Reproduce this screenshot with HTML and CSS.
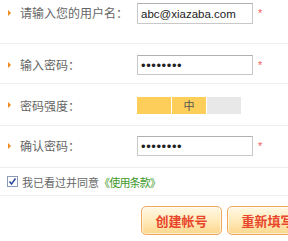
FILE: index.html
```html
<!DOCTYPE html>
<html lang="zh">
<head>
<meta charset="utf-8">
<link rel="stylesheet" href="styles.css">
</head>
<body>
<div class="form">
  <div class="row r1">
    <span class="bullet"></span>
    <label class="label">请输入您的用户名：</label>
    <input class="field tall" type="text" value="abc@xiazaba.com">
    <span class="req">*</span>
  </div>
  <div class="row r2">
    <span class="bullet"></span>
    <label class="label">输入密码：</label>
    <input class="field" type="password" value="12345678">
    <span class="req">*</span>
  </div>
  <div class="row r3">
    <span class="bullet"></span>
    <label class="label">密码强度：</label>
    <div class="strength">
      <span class="seg on"></span>
      <span class="seg on">中</span>
      <span class="seg"></span>
    </div>
  </div>
  <div class="row r4">
    <span class="bullet"></span>
    <label class="label">确认密码：</label>
    <input class="field" type="password" value="12345678">
    <span class="req">*</span>
  </div>
  <div class="row r5">
    <span class="check">
      <svg width="11" height="11" viewBox="0 0 11 11"><rect x="0.5" y="0.5" width="10" height="10" fill="#fff" stroke="#8a9ab8"/><path d="M2.5 5.5 L4.5 8 L8.5 2.5" fill="none" stroke="#2a4a9a" stroke-width="1.5"/></svg>
    </span>
    <span class="agree">我已看过并同意<a class="terms">《使用条款》</a></span>
  </div>
  <div class="buttons">
    <button class="btn">创建帐号</button>
    <button class="btn">重新填写</button>
  </div>
</div>
</body>
</html>
```
FILE: styles.css
```css
html, body {
  margin: 0;
  padding: 0;
  background: #fff;
  overflow: hidden;
}
body {
  width: 288px;
  height: 241px;
  font-family: "Noto Sans CJK SC", "Liberation Sans", sans-serif;
  font-size: 12px;
  color: #666;
}
.form {
  display: flex;
  flex-direction: column;
}
.row {
  display: flex;
  align-items: center;
  border-bottom: 1px solid #eeeeee;
  box-sizing: border-box;
  padding-left: 8px;
}
.r1 { height: 44px; align-items: flex-start; padding-top: 3px; }
.r2 { height: 40px; align-items: flex-start; padding-top: 11px; }
.r3 { height: 42px; align-items: flex-start; padding-top: 13px; }
.r4 { height: 42px; align-items: flex-start; padding-top: 10px; }
.r5 { height: 28px; padding-left: 7px; }
.bullet {
  width: 0;
  height: 0;
  border-left: 3px solid #f08a1c;
  border-top: 3px solid transparent;
  border-bottom: 3px solid transparent;
  margin-right: 9px;
  align-self: flex-start;
  margin-top: 7px;
}
.r3 .bullet { margin-top: 5px; }
.label {
  width: 117px;
  line-height: 20px;
  flex: none;
}
.r3 .label { line-height: 17px; }
.field {
  width: 116px;
  height: 20px;
  box-sizing: border-box;
  border: 1px solid #c8c8c8;
  border-top-color: #b0b0b0;
  padding: 0 3px;
  margin: 0;
  font-family: "Liberation Sans", Arial, sans-serif;
  font-size: 11.5px;
  color: #222;
  background: #fff;
  outline: none;
}
.field.tall { height: 21px; }
.field[type=password] {
  font-size: 13px;
  letter-spacing: 0.6px;
}
.req {
  color: #f06060;
  font-family: "Liberation Sans", Arial, sans-serif;
  font-size: 11px;
  margin-left: 5px;
  line-height: 20px;
}
.strength {
  display: flex;
  gap: 1px;
}
.seg {
  width: 34px;
  height: 17px;
  background: #e8e8e8;
  font-size: 11px;
  line-height: 17px;
  text-align: center;
  color: #555;
}
.seg.on { background: #fdcf5a; }
.check {
  display: flex;
  width: 11px;
  height: 11px;
  margin-right: 4px;
}
.agree {
  color: #666;
  font-size: 11px;
  line-height: 14px;
}
.terms {
  color: #3f9a2a;
  font-size: 11px;
  letter-spacing: -0.8px;
}
.buttons {
  display: flex;
  gap: 5px;
  padding: 10px 0 0 141px;
}
.btn {
  flex: none;
  width: 81px;
  height: 29px;
  border: 1px solid #f3a75a;
  border-radius: 5px;
  background: linear-gradient(#fff8e4, #ffe9b8 55%, #fdd68c);
  color: #e8462a;
  font-family: "Noto Sans CJK SC", sans-serif;
  font-weight: bold;
  font-size: 13px;
  padding: 0;
  margin: 0;
  white-space: nowrap;
  overflow: hidden;
  box-shadow: inset 0 0 0 1px rgba(255,255,255,0.6);
}
```
